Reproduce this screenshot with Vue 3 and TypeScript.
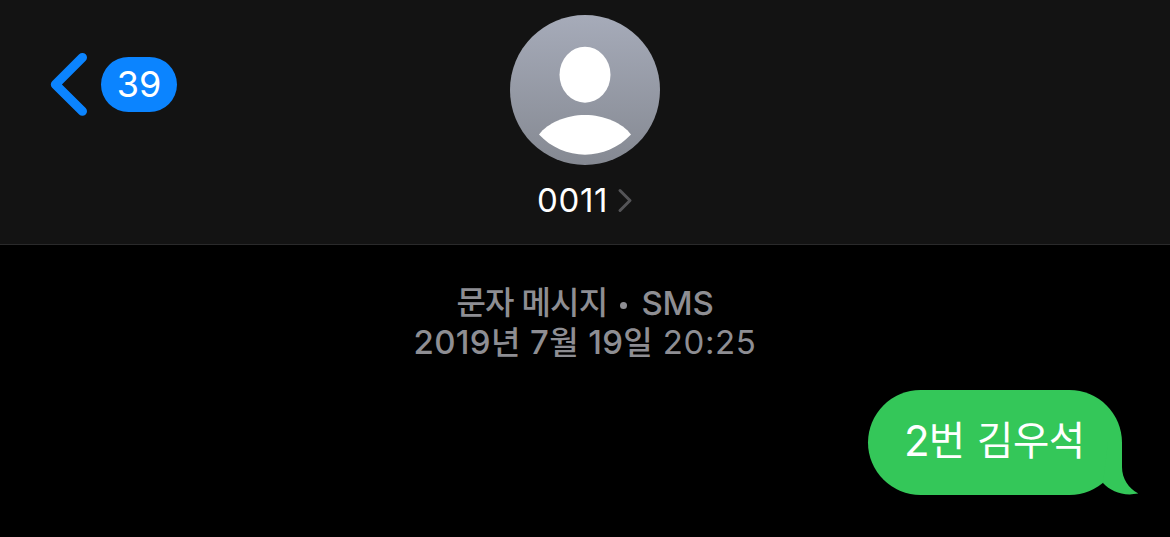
<script setup lang="ts">
const unread: number = 39
const contact: string = '0011'
</script>

<template>
  <main class="screen">
    <header class="header">
      <button class="back" type="button">
        <svg class="back-icon" width="40" height="68" viewBox="0 0 40 68" aria-hidden="true">
          <path d="M33.400 7.600 6.400 34.400 33.400 61.200" />
        </svg>
        <span class="badge">{{ unread }}</span>
      </button>
      <div class="contact">
        <svg class="avatar" width="150" height="150" viewBox="0 0 150 150" aria-hidden="true">
          <defs>
            <linearGradient id="avatarFill" x1="0" y1="0" x2="0" y2="1">
              <stop offset="0" stop-color="#a6abb9" />
              <stop offset="1" stop-color="#858992" />
            </linearGradient>
          </defs>
          <circle cx="75" cy="75" r="75" fill="url(#avatarFill)" />
          <ellipse cx="75" cy="59.700" rx="25.500" ry="28" fill="#fff" />
          <path d="M29 119.500C37.500 108 56 100 75 100S112.500 108 121 119.500C109 132.500 92 139.700 75 139.700S41 132.500 29 119.500Z" fill="#fff" />
        </svg>
        <div class="name-row">
          <span class="name">{{ contact }}</span>
          <svg class="chevron" width="16" height="26" viewBox="0 0 16 26" aria-hidden="true">
            <path d="M3 3.500 13 13.500 3 23.500" />
          </svg>
        </div>
      </div>
    </header>

    <section class="thread">
      <div class="stamp">
        <div class="line service"><span class="ko">문자 메시지</span><span class="dot"></span><span class="sms">SMS</span></div>
        <div class="line"><span class="date">2019<span class="unit">년</span> 7<span class="unit">월</span> 19<span class="unit">일</span></span><span class="time">20:25</span></div>
      </div>
      <div class="bubble">
        <svg class="tail" width="50" height="60" viewBox="0 0 50 60" aria-hidden="true">
          <path d="M20 7H34V32C34 44 41 54 50.500 58.500C35 61.500 23 56.500 15 48Z" />
        </svg>
        <span class="message">2<span class="hangul">번 김우석</span></span>
      </div>
    </section>
  </main>
</template>

<style>
body {
  background: #000;
}
</style>

<style scoped>
.screen {
  width: 1170px;
  height: 537px;
  overflow: hidden;
  background: #000;
  color: #fff;
  font-family: Inter, "Noto Sans CJK KR", sans-serif;
}
.header {
  box-sizing: border-box;
  height: 245px;
  display: grid;
  grid-template-columns: 1fr 150px 1fr;
  background: #131313;
  border-bottom: 1px solid #2a2a2b;
}
.back {
  justify-self: start;
  align-self: start;
  display: flex;
  align-items: center;
  gap: 12px;
  margin: 50px 0 0 49px;
  padding: 0;
  border: 0;
  background: none;
  color: inherit;
  font: inherit;
}
.back-icon path {
  fill: none;
  stroke: #0b84ff;
  stroke-width: 9.200;
  stroke-linecap: round;
  stroke-linejoin: round;
}
.badge {
  width: 76px;
  height: 55px;
  border-radius: 28px;
  background: #0b84ff;
  font-size: 36px;
  line-height: 55px;
  text-align: center;
}
.contact {
  display: flex;
  flex-direction: column;
  align-items: center;
  padding-top: 15px;
}
.avatar {
  display: block;
  flex: none;
}
.name-row {
  display: flex;
  align-items: center;
  gap: 9px;
  height: 40px;
  margin-top: 15px;
}
.name {
  font-size: 33px;
  line-height: 40px;
  letter-spacing: 0.6px;
}
.chevron path {
  fill: none;
  stroke: #545457;
  stroke-width: 3;
  stroke-linecap: round;
  stroke-linejoin: round;
}
.thread {
  display: flex;
  flex-direction: column;
  padding-top: 39px;
}
.stamp {
  color: #8e8e93;
  font-size: 33px;
}
.line {
  display: flex;
  justify-content: center;
  height: 39px;
  line-height: 39px;
  white-space: pre;
}
.service {
  align-items: center;
  font-weight: 500;
}
.ko {
  margin-top: -2px;
  font-size: 32px;
  letter-spacing: -0.8px;
}
.sms {
  letter-spacing: -0.2px;
}
.dot {
  width: 7px;
  height: 7px;
  margin: 4px 14px 0 13px;
  border-radius: 50%;
  background: currentColor;
}
.date {
  margin-right: 10px;
  font-weight: 500;
  letter-spacing: 0.3px;
  word-spacing: 0.5px;
}
.unit {
  font-size: 32px;
  letter-spacing: 0;
}
.time {
  letter-spacing: 0.6px;
}
.bubble {
  position: relative;
  align-self: flex-end;
  box-sizing: border-box;
  width: 254px;
  height: 105px;
  margin: 28px 48px 0 0;
  padding-left: 36px;
  border-radius: 52.500px;
  background: #34c759;
  line-height: 102px;
  font-size: 42px;
  white-space: nowrap;
}
.message {
  position: relative;
}
.hangul {
  margin-left: -1px;
  font-size: 39.500px;
  letter-spacing: -0.500px;
  word-spacing: 2px;
  vertical-align: 1.500px;
  line-height: 1;
}
.tail {
  position: absolute;
  right: -16px;
  bottom: 0;
}
.tail path {
  fill: #34c759;
}
</style>
